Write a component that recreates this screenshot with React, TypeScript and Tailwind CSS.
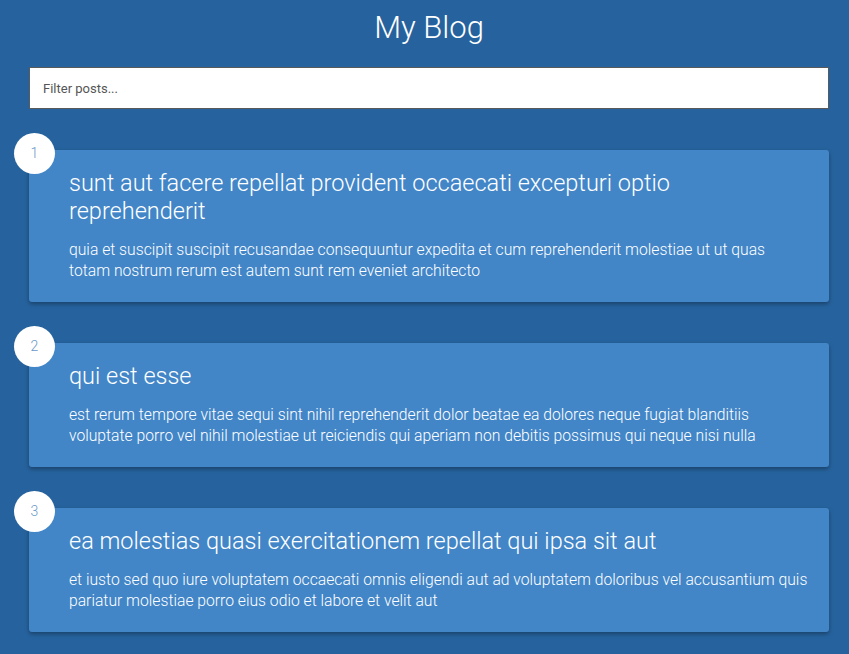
const posts = [
  {
    id: 1,
    title: 'sunt aut facere repellat provident occaecati excepturi optio reprehenderit',
    body: 'quia et suscipit suscipit recusandae consequuntur expedita et cum reprehenderit molestiae ut ut quas totam nostrum rerum est autem sunt rem eveniet architecto',
  },
  {
    id: 2,
    title: 'qui est esse',
    body: 'est rerum tempore vitae sequi sint nihil reprehenderit dolor beatae ea dolores neque fugiat blanditiis voluptate porro vel nihil molestiae ut reiciendis qui aperiam non debitis possimus qui neque nisi nulla',
  },
  {
    id: 3,
    title: 'ea molestias quasi exercitationem repellat qui ipsa sit aut',
    body: 'et iusto sed quo iure voluptatem occaecati omnis eligendi aut ad voluptatem doloribus vel accusantium quis pariatur molestiae porro eius odio et labore et velit aut',
  },
]

const App = () => {
  return (
    <div className="min-h-screen bg-[#26639e] pt-[8px] pb-[24px] font-['Roboto','Liberation_Sans',sans-serif] font-light text-white">
      <div className="ml-[29px] w-[800px]">
        <h1 className="text-center text-[31px] leading-[40px] font-light">My Blog</h1>
        <input
          type="text"
          placeholder="Filter posts..."
          className="mt-[19px] block h-[42px] w-full border border-[#5a5a5a] bg-white px-[13px] font-['Roboto','Liberation_Sans',sans-serif] text-[13px] font-normal text-[#333] outline-none placeholder:text-[#555]"
        />
        {posts.map((post) => (
          <div
            key={post.id}
            className="relative mt-[41px] rounded-[3px] bg-[#4286c8] pt-[19px] pr-[21px] pb-[21px] pl-[40px] shadow-[0_2px_4px_rgba(0,0,0,0.35)]"
          >
            <div className="absolute -top-[17px] -left-[15px] flex h-[41px] w-[41px] items-center justify-center rounded-full bg-white text-[14px] font-light text-[#6b98c8]">
              {post.id}
            </div>
            <h2 className="text-[23.5px] leading-[28px] font-light">{post.title}</h2>
            <p className="mt-[14px] text-[15.7px] leading-[21px] font-light">{post.body}</p>
          </div>
        ))}
      </div>
    </div>
  )
}

export default App
